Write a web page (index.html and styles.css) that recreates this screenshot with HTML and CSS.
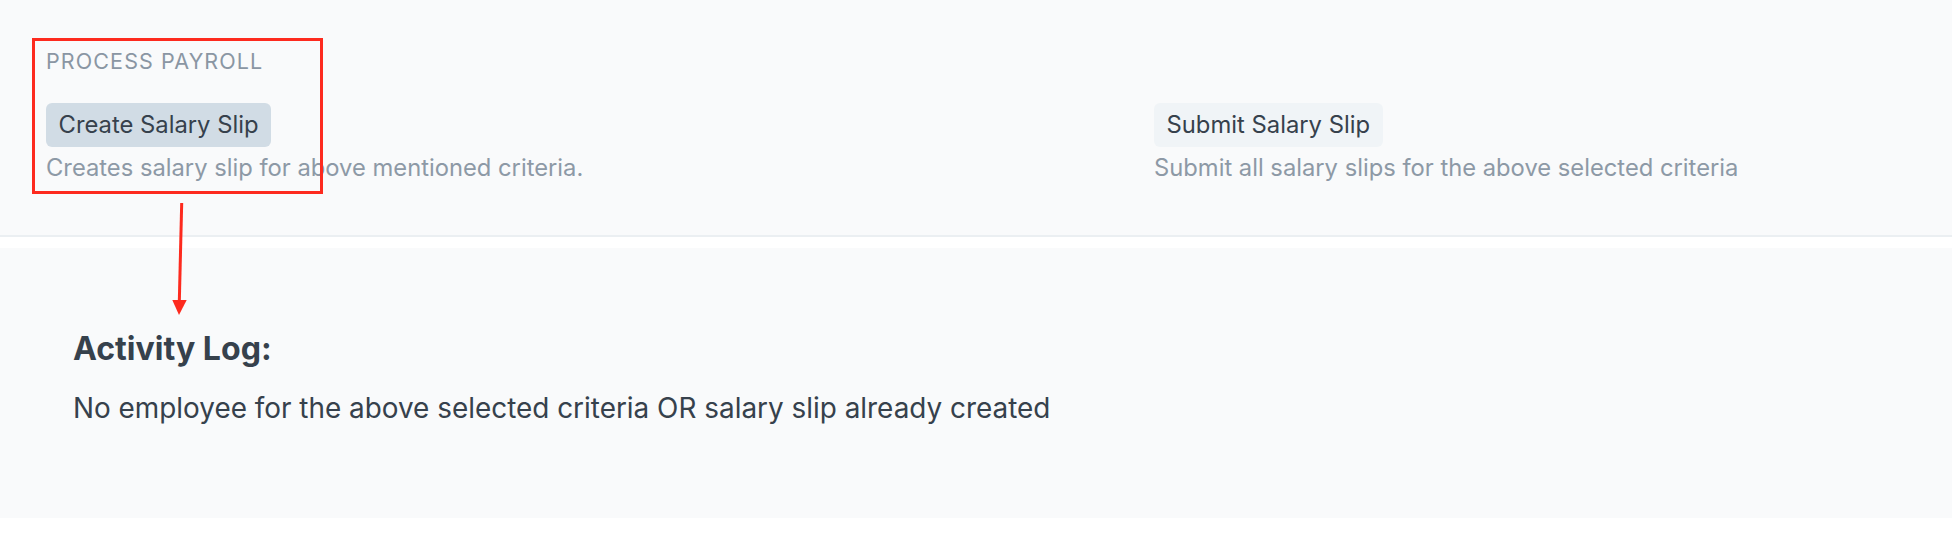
FILE: index.html
```html
<!DOCTYPE html>
<html lang="en">
<head>
<meta charset="utf-8">
<title>Process Payroll</title>
<link rel="stylesheet" href="styles.css">
</head>
<body>
<div class="page">
  <section class="form-section">
    <div class="section-head">Process Payroll</div>
    <div class="section-body">
      <div class="form-column">
        <button class="btn btn-active">Create Salary Slip</button>
        <p class="help-box">Creates salary slip for above mentioned criteria.</p>
      </div>
      <div class="form-column">
        <button class="btn">Submit Salary Slip</button>
        <p class="help-box">Submit all salary slips for the above selected criteria</p>
      </div>
    </div>
  </section>
  <section class="log-section">
    <h4 class="log-title">Activity Log:</h4>
    <p class="log-text">No employee for the above selected criteria OR salary slip already created</p>
  </section>

  <div class="annot-box"></div>
  <svg class="annot-arrow" width="24" height="120" viewBox="0 0 24 120">
    <line x1="13.7" y1="1" x2="11.3" y2="100" stroke="#fd2a1e" stroke-width="3"/>
    <polygon points="4.3,98 18.7,98 11,113" fill="#fd2a1e"/>
  </svg>
</div>
</body>
</html>
```

FILE: styles.css
```css
* { box-sizing: border-box; }

html, body {
  margin: 0;
  padding: 0;
  background: #ffffff;
}

body {
  font-family: "Inter", "Noto Sans", sans-serif;
  color: #36414c;
}

.page {
  position: relative;
  width: 1952px;
  height: 536px;
}

.form-section {
  background: #f9fafb;
  border-bottom: 2px solid #ebeff2;
  height: 237px;
  padding: 49px 0 0 46px;
}

.section-head {
  font-size: 21.5px;
  line-height: 24px;
  text-transform: uppercase;
  letter-spacing: 1.1px;
  color: #8a96a3;
  margin-bottom: 30px;
}

.section-body {
  display: grid;
  grid-template-columns: 1108px 1fr;
}

.form-column {
  display: flex;
  flex-direction: column;
  align-items: flex-start;
}

.btn {
  font-family: inherit;
  font-size: 23.8px;
  line-height: 24px;
  height: 44px;
  padding: 10px 12.5px;
  border: none;
  border-radius: 6px;
  background: #f0f4f7;
  color: #36414c;
  cursor: pointer;
}

.btn-active {
  background: #d1dce5;
}

.help-box {
  margin: 7px 0 0;
  font-size: 23.75px;
  line-height: 28px;
  color: #8d99a6;
}

.log-section {
  margin-top: 11px;
  height: 270px;
  background: #f9fafb;
  padding: 83px 73px 0;
}

.log-title {
  margin: 0;
  font-size: 32.1px;
  line-height: 36px;
  font-weight: 700;
  color: #36414c;
}

.log-text {
  margin: 24px 0 0;
  font-size: 27.9px;
  line-height: 34px;
  color: #36414c;
}

.annot-box {
  position: absolute;
  left: 32px;
  top: 38px;
  width: 291px;
  height: 156px;
  border: 3px solid #fd2a1e;
}

.annot-arrow {
  position: absolute;
  left: 168px;
  top: 202px;
  overflow: visible;
}
```
